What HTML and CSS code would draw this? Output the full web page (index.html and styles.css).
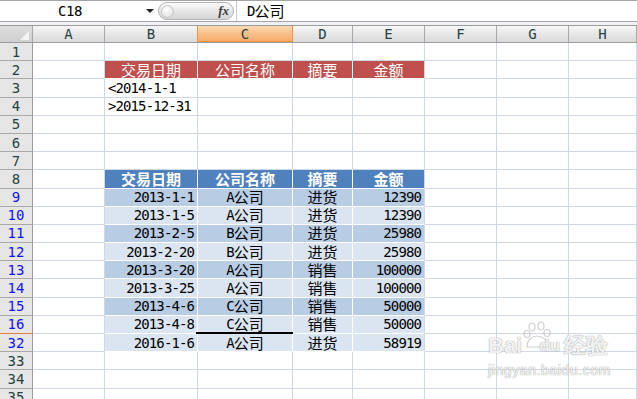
FILE: index.html
```html
<!DOCTYPE html>
<html lang="zh">

<head>
  <meta charset="UTF-8">
  <title>筛选</title>
  <link rel="stylesheet" href="styles.css">
</head>

<body>

  <div class="fbar">
    <div class="namebox"><span class="ref">C18</span><span class="arrow"></span></div>
    <div class="pill"><span class="knob"></span><span class="fx">fx</span></div>
    <div class="formula"><span class="num">D</span>公司</div>
  </div>
  <div class="band"></div>

  <div class="sheet">
    <div class="grid colhead">
      <div class="corner"><span class="tri"></span></div>
      <div>A</div><div>B</div><div class="sel">C</div><div>D</div><div>E</div><div>F</div><div>G</div><div>H</div>
    </div>

    <div class="grid row"><div class="rh">1</div><div class="c"></div><div class="c"></div><div class="c"></div><div class="c"></div><div class="c"></div><div class="c"></div><div class="c"></div><div class="c"></div></div>
    <div class="grid row"><div class="rh">2</div><div class="c"></div><div class="c red">交易日期</div><div class="c red">公司名称</div><div class="c red">摘要</div><div class="c red last">金额</div><div class="c"></div><div class="c"></div><div class="c"></div></div>
    <div class="grid row"><div class="rh">3</div><div class="c"></div><div class="c left num">&lt;2014-1-1</div><div class="c"></div><div class="c"></div><div class="c"></div><div class="c"></div><div class="c"></div><div class="c"></div></div>
    <div class="grid row"><div class="rh">4</div><div class="c"></div><div class="c left num">&gt;2015-12-31</div><div class="c"></div><div class="c"></div><div class="c"></div><div class="c"></div><div class="c"></div><div class="c"></div></div>
    <div class="grid row"><div class="rh">5</div><div class="c"></div><div class="c"></div><div class="c"></div><div class="c"></div><div class="c"></div><div class="c"></div><div class="c"></div><div class="c"></div></div>
    <div class="grid row"><div class="rh">6</div><div class="c"></div><div class="c"></div><div class="c"></div><div class="c"></div><div class="c"></div><div class="c"></div><div class="c"></div><div class="c"></div></div>
    <div class="grid row"><div class="rh">7</div><div class="c"></div><div class="c"></div><div class="c"></div><div class="c"></div><div class="c"></div><div class="c"></div><div class="c"></div><div class="c"></div></div>
    <div class="grid row"><div class="rh">8</div><div class="c"></div><div class="c blue">交易日期</div><div class="c blue">公司名称</div><div class="c blue">摘要</div><div class="c blue last">金额</div><div class="c"></div><div class="c"></div><div class="c"></div></div>

    <div class="grid row"><div class="rh hit">9</div><div class="c"></div><div class="c dark right num">2013-1-1</div><div class="c dark"><span class="num">A</span>公司</div><div class="c dark">进货</div><div class="c dark right num last">12390</div><div class="c"></div><div class="c"></div><div class="c"></div></div>
    <div class="grid row"><div class="rh hit">10</div><div class="c"></div><div class="c light right num">2013-1-5</div><div class="c light"><span class="num">A</span>公司</div><div class="c light">进货</div><div class="c light right num last">12390</div><div class="c"></div><div class="c"></div><div class="c"></div></div>
    <div class="grid row"><div class="rh hit">11</div><div class="c"></div><div class="c dark right num">2013-2-5</div><div class="c dark"><span class="num">B</span>公司</div><div class="c dark">进货</div><div class="c dark right num last">25980</div><div class="c"></div><div class="c"></div><div class="c"></div></div>
    <div class="grid row"><div class="rh hit">12</div><div class="c"></div><div class="c light right num">2013-2-20</div><div class="c light"><span class="num">B</span>公司</div><div class="c light">进货</div><div class="c light right num last">25980</div><div class="c"></div><div class="c"></div><div class="c"></div></div>
    <div class="grid row"><div class="rh hit">13</div><div class="c"></div><div class="c dark right num">2013-3-20</div><div class="c dark"><span class="num">A</span>公司</div><div class="c dark">销售</div><div class="c dark right num last">100000</div><div class="c"></div><div class="c"></div><div class="c"></div></div>
    <div class="grid row"><div class="rh hit">14</div><div class="c"></div><div class="c light right num">2013-3-25</div><div class="c light"><span class="num">A</span>公司</div><div class="c light">销售</div><div class="c light right num last">100000</div><div class="c"></div><div class="c"></div><div class="c"></div></div>
    <div class="grid row"><div class="rh hit">15</div><div class="c"></div><div class="c dark right num">2013-4-6</div><div class="c dark"><span class="num">C</span>公司</div><div class="c dark">销售</div><div class="c dark right num last">50000</div><div class="c"></div><div class="c"></div><div class="c"></div></div>
    <div class="grid row"><div class="rh hit active">16</div><div class="c"></div><div class="c light right num">2013-4-8</div><div class="c light mark"><span class="num">C</span>公司</div><div class="c light">销售</div><div class="c light right num last">50000</div><div class="c"></div><div class="c"></div><div class="c"></div></div>
    <div class="grid row"><div class="rh hit">32</div><div class="c"></div><div class="c light right num">2016-1-6</div><div class="c light"><span class="num">A</span>公司</div><div class="c light">进货</div><div class="c light right num last">58919</div><div class="c"></div><div class="c"></div><div class="c"></div></div>

    <div class="grid row"><div class="rh">33</div><div class="c"></div><div class="c"></div><div class="c"></div><div class="c"></div><div class="c"></div><div class="c"></div><div class="c"></div><div class="c"></div></div>
    <div class="grid row"><div class="rh">34</div><div class="c"></div><div class="c"></div><div class="c"></div><div class="c"></div><div class="c"></div><div class="c"></div><div class="c"></div><div class="c"></div></div>
    <div class="grid row"><div class="rh">35</div><div class="c"></div><div class="c"></div><div class="c"></div><div class="c"></div><div class="c"></div><div class="c"></div><div class="c"></div><div class="c"></div></div>

    <!-- watermark -->
    <div class="wm">
      <div class="wm-top">
        <span>Bai</span>
        <svg class="paw" width="30" height="30" viewBox="0 0 30 30">
          <ellipse cx="9" cy="6" rx="3" ry="4" />
          <ellipse cx="18" cy="5" rx="3" ry="4" />
          <ellipse cx="4" cy="13" rx="3" ry="3.5" />
          <ellipse cx="24" cy="12" rx="3" ry="3.5" />
          <path d="M4 26 C4 18 10 15 14 15 C19 15 25 19 25 26 Z" />
        </svg>
        <span class="du">du</span>
        <span>经验</span>
      </div>
      <div class="wm-url">jingyan.baidu.com</div>
    </div>
  </div>

</body>

</html>
```

FILE: styles.css
```css
* {
  box-sizing: border-box;
}

body {
  margin: 0;
  width: 637px;
  height: 399px;
  overflow: hidden;
  background-color: white;
  font-family: "Noto Sans CJK SC", sans-serif;
  font-size: 15px;
  line-height: 16px;
  color: #000;
}

.num {
  font-family: "DejaVu Sans Mono", "Noto Sans CJK SC", monospace;
  font-size: 14px;
  letter-spacing: -0.9px;
}

/* formula bar */
.fbar {
  display: flex;
  align-items: center;
  height: 22px;
  border-top: 1px solid #a5a5a5;
  border-bottom: 1px solid #a5a5a5;
  background-color: white;
}

.namebox {
  width: 158px;
  display: flex;
  align-items: center;
  height: 100%;
}

.namebox .ref {
  width: 140px;
  text-align: center;
  font-family: "DejaVu Sans Mono", monospace;
  font-size: 14px;
  letter-spacing: -0.5px;
}

.namebox .arrow {
  width: 0;
  height: 0;
  border-left: 4px solid transparent;
  border-right: 4px solid transparent;
  border-top: 4px solid #222;
  margin-left: 6px;
}

.pill {
  width: 76px;
  height: 18px;
  border: 1px solid #b5b5b5;
  border-radius: 9px;
  background: linear-gradient(#fbfbfb, #e4e4e4 55%, #d5d5d5);
  display: flex;
  align-items: center;
  justify-content: space-between;
  padding: 0 4px 0 2px;
}

.knob {
  width: 13px;
  height: 13px;
  border-radius: 50%;
  border: 1px solid #c6c6c6;
  background: radial-gradient(circle at 40% 35%, #ffffff, #dcdcdc);
}

.fx {
  font-family: "Liberation Serif", serif;
  font-style: italic;
  font-weight: bold;
  font-size: 13px;
  color: #3a3a3a;
}

.formula {
  flex: 1;
  height: 100%;
  border-left: 1px solid #c8c8c8;
  margin-left: 2px;
  padding-left: 10px;
  display: flex;
  align-items: center;
}

.band {
  height: 3px;
  background-color: #eef1f5;
}

/* sheet */
.sheet {
  position: relative;
}

.grid {
  display: grid;
  grid-template-columns: 33px 72px 93px 95px 60px 72px 72px 72px 1fr;
  grid-template-rows: 100%;
}

.colhead {
  height: 18px;
  border-top: 1px solid #9c9c9c;
  border-bottom: 1px solid #9c9c9c;
  background: linear-gradient(#f7f7f7, #e6e6e6 50%, #dadada);
}

.colhead div {
  display: flex;
  align-items: center;
  justify-content: center;
  border-right: 1px solid #a8a8a8;
  font-family: "DejaVu Sans Mono", monospace;
  font-size: 14px;
  color: #27413e;
}

.colhead .sel {
  background: linear-gradient(#fcd9b2, #f9bd86 50%, #f7ab6a);
  border-right-color: #f29436;
  border-left: 1px solid #f29436;
  margin-left: -1px;
  box-shadow: inset 0 -1px 0 #f29436;
}

.colhead .corner {
  background: linear-gradient(#dedede, #cfcfcf);
  position: relative;
}

.corner .tri {
  position: absolute;
  right: 3px;
  bottom: 2px;
  width: 0;
  height: 0;
  border-left: 9px solid transparent;
  border-bottom: 9px solid #f4f4f4;
}

.row {
  height: 18.2px;
}

.rh {
  background-color: #e6e6e6;
  border-right: 1px solid #9c9c9c;
  border-bottom: 1px solid #a8a8a8;
  display: flex;
  align-items: center;
  justify-content: center;
  font-family: "DejaVu Sans Mono", monospace;
  font-size: 14px;
  color: #27413e;
  overflow: hidden;
}

.rh.hit {
  color: #1010ff;
}

.rh.active {
  border-bottom: 1px solid #e8803a;
}

.c {
  border-right: 1px solid #d0d7e5;
  border-bottom: 1px solid #d0d7e5;
  display: flex;
  align-items: center;
  justify-content: center;
  white-space: nowrap;
  position: relative;
  min-height: 0;
}

.c.left {
  justify-content: flex-start;
  padding-left: 3px;
}

.c.right {
  justify-content: flex-end;
  padding-right: 3px;
}

.c.red {
  background-color: #c0504d;
  color: white;
  border-right-color: white;
  border-bottom-color: white;
}

.c.blue {
  background-color: #4f81bd;
  color: white;
  font-weight: bold;
  border-right-color: white;
  border-bottom-color: white;
}

.c.dark {
  background-color: #b8cce4;
  border-right-color: white;
  border-bottom-color: white;
}

.c.light {
  background-color: #dbe5f1;
  border-right-color: white;
  border-bottom-color: white;
}

.c.last {
  border-right-color: #d0d7e5;
}

.c.mark::after {
  content: "";
  position: absolute;
  left: -2px;
  right: -2px;
  bottom: -2px;
  height: 3px;
  background-color: #000;
}

/* watermark */
.wm {
  position: absolute;
  left: 488px;
  top: 296px;
  color: rgba(255, 255, 255, 0.9);
  text-shadow: 0 0 1px rgba(120, 120, 120, 0.6), 0 0 1px rgba(120, 120, 120, 0.6);
  font-family: "Liberation Sans", sans-serif;
  font-weight: bold;
}

.wm-top {
  display: flex;
  align-items: flex-end;
  font-size: 22px;
  line-height: 22px;
}

.wm-top .du {
  margin-left: -14px;
  margin-right: 4px;
  font-size: 17px;
}

.paw {
  margin-left: 1px;
  margin-bottom: 6px;
  fill: none;
  stroke: rgba(150, 150, 150, 0.45);
  stroke-width: 1.2;
}

.wm-url {
  font-size: 14px;
  line-height: 16px;
  font-weight: normal;
  margin-top: 5px;
  letter-spacing: 0.6px;
}
```
